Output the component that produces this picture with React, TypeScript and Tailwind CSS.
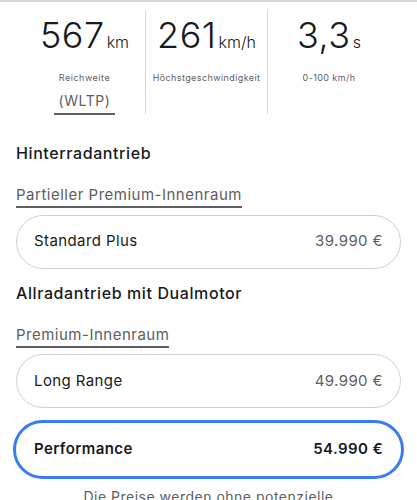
export default function App() {
  const font = { fontFamily: 'Inter, "Noto Sans", sans-serif' }
  return (
    <div className="w-[417px] h-[500px] overflow-hidden bg-white border-t-2 border-[#d6d6d6] text-[#171a20]" style={font}>
      {/* Stats */}
      <div className="flex pl-[24px] pt-[8px]">
        <div className="w-[122px] h-[104px] flex flex-col items-center border-r border-[#d9d9d9]">
          <div className="flex items-baseline mt-[3px]">
            <span className="text-[36px] font-light leading-[44px] tracking-[0.5px]">567</span>
            <span className="text-[16px] font-light ml-[2px]">km</span>
          </div>
          <div className="text-[9px] text-[#5c5e62] mt-[14px] tracking-[0.5px]">Reichweite</div>
          <div className="text-[14px] text-[#5c5e62] mt-[7px] pb-[4px] border-b-2 border-[#5c5e62] px-[4px] leading-[17px] tracking-[0.6px]">(WLTP)</div>
        </div>
        <div className="w-[122px] h-[104px] flex flex-col items-center border-r border-[#d9d9d9]">
          <div className="flex items-baseline mt-[3px]">
            <span className="text-[36px] font-light leading-[44px] tracking-[0.5px]">261</span>
            <span className="text-[16px] font-light ml-[2px]">km/h</span>
          </div>
          <div className="text-[9px] text-[#5c5e62] mt-[14px] tracking-[0.4px]">Höchstgeschwindigkeit</div>
        </div>
        <div className="w-[122px] h-[104px] flex flex-col items-center">
          <div className="flex items-baseline mt-[3px]">
            <span className="text-[36px] font-light leading-[44px] tracking-[0.5px]">3,3</span>
            <span className="text-[16px] font-light ml-[2px]">s</span>
          </div>
          <div className="text-[9px] text-[#5c5e62] mt-[14px] tracking-[0.4px]">0-100 km/h</div>
        </div>
      </div>

      <div className="px-[16px]">
        <h2 className="text-[16px] font-medium mt-[29px] leading-[20px] tracking-[0.6px]">Hinterradantrieb</h2>
        <div className="mt-[19px]">
          <span className="text-[15px] text-[#5c5e62] border-b-2 border-[#5c5e62] pb-[2px] tracking-[0.5px]">Partieller Premium-Innenraum</span>
        </div>
        <div className="mt-[8px] h-[54px] rounded-full border border-[#d0d1d2] flex items-center justify-between px-[17px] tracking-[0.4px]">
          <span className="text-[15px]">Standard Plus</span>
          <span className="text-[15px] text-[#5c5e62]">39.990 €</span>
        </div>

        <h2 className="text-[16px] font-medium mt-[14px] leading-[20px] tracking-[0.6px]">Allradantrieb mit Dualmotor</h2>
        <div className="mt-[19px]">
          <span className="text-[15px] text-[#5c5e62] border-b-2 border-[#5c5e62] pb-[2px] tracking-[0.5px]">Premium-Innenraum</span>
        </div>
        <div className="mt-[8px] h-[54px] rounded-full border border-[#d0d1d2] flex items-center justify-between px-[17px] tracking-[0.4px]">
          <span className="text-[15px]">Long Range</span>
          <span className="text-[15px] text-[#5c5e62]">49.990 €</span>
        </div>

        <div className="mt-[12px] -mx-[3px] h-[59px] rounded-full border-[3px] border-[#3b7bf0] flex items-center justify-between px-[18px] tracking-[0.4px]">
          <span className="text-[15px] font-semibold">Performance</span>
          <span className="text-[15px] font-semibold">54.990 €</span>
        </div>

        <p className="text-center text-[14px] text-[#5c5e62] mt-[8px] leading-[20px] tracking-[0.5px]">Die Preise werden ohne potenzielle</p>
      </div>
    </div>
  )
}
